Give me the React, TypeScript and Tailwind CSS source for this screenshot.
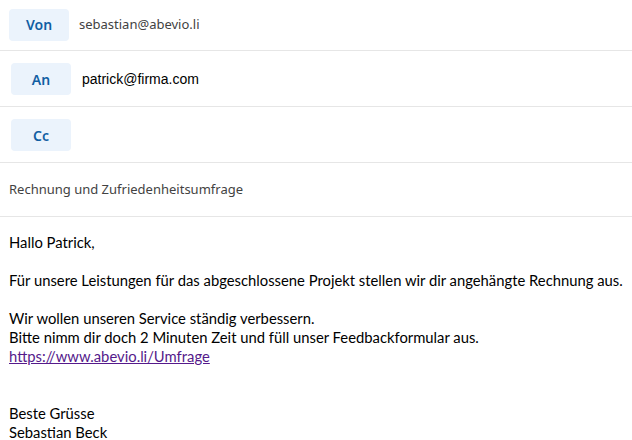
import React from 'react';

// Mail compose preview: header fields + plain body
const fieldLabel =
  "flex h-8 w-[60px] shrink-0 items-center justify-center rounded-[4px] bg-[#ebf3fc] text-[14px] font-semibold text-[#115ea3]";

const HeaderRow: React.FC<{ label: string; offset?: string; rowClass: string; children?: React.ReactNode }> = ({
  label,
  offset = "pl-[11px]",
  rowClass,
  children,
}) => (
  <div className={`flex items-center border-b border-[#e6e6e6] ${offset} ${rowClass}`}>
    <div className={fieldLabel}>{label}</div>
    {children}
  </div>
);

const App: React.FC = () => {
  return (
    <div className="h-[440px] w-[632px] overflow-hidden bg-white font-['Segoe_UI','Noto_Sans',sans-serif]">
      <HeaderRow label="Von" offset="pl-[9px]" rowClass="h-[51px] pb-[1px]">
        <span className="ml-[10px] text-[13px] text-[#424242]">sebastian@abevio.li</span>
      </HeaderRow>
      <HeaderRow label="An" rowClass="h-[56px] pt-[1px]">
        <span className="ml-[11px] font-['Liberation_Sans',Arial,sans-serif] text-[14px] text-black">
          patrick@firma.com
        </span>
      </HeaderRow>
      <HeaderRow label="Cc" rowClass="h-[56px] pt-[1px]" />
      <div className="flex h-[54px] items-center border-b border-[#e6e6e6] pl-[9px] text-[13px] text-[#424242]">
        Rechnung und Zufriedenheitsumfrage
      </div>

      <div className="whitespace-nowrap px-[9px] pt-[16px] font-['Lato',sans-serif] text-[14.8px] leading-[19px] text-black">
        <p>Hallo Patrick,</p>
        <p className="mt-[19px]">
          Für unsere Leistungen für das abgeschlossene Projekt stellen wir dir angehängte Rechnung aus.
        </p>
        <p className="mt-[19px]">Wir wollen unseren Service ständig verbessern.</p>
        <p>Bitte nimm dir doch 2 Minuten Zeit und füll unser Feedbackformular aus.</p>
        <p>
          <a href="#" className="text-[#551a8b] underline">
            https://www.abevio.li/Umfrage
          </a>
        </p>
        <p className="mt-[38px]">Beste Grüsse</p>
        <p>Sebastian Beck</p>
      </div>
    </div>
  );
};

export default App;
